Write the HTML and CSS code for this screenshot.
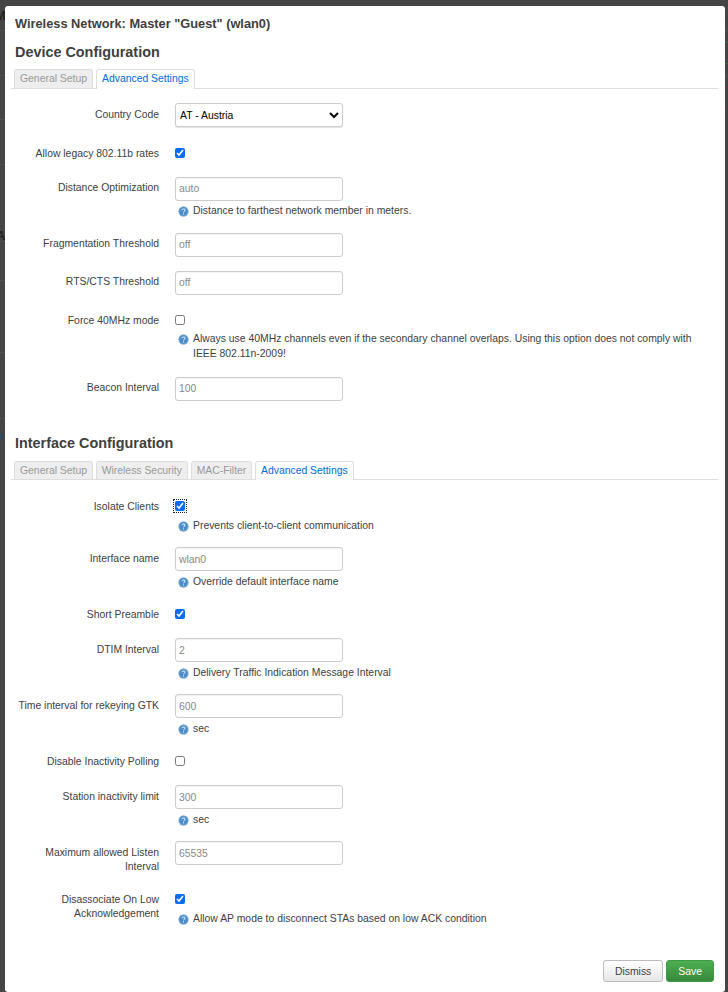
FILE: index.html
```html
<!DOCTYPE html>
<html lang="en">
<head>
<meta charset="utf-8">
<title>Wireless Network</title>
<link rel="stylesheet" href="styles.css">
</head>
<body>
<svg class="defs" width="0" height="0" aria-hidden="true">
  <defs>
    <radialGradient id="hg" cx="50%" cy="50%" r="55%">
      <stop offset="0" stop-color="#3d86c6"/>
      <stop offset="0.65" stop-color="#4f90c8"/>
      <stop offset="1" stop-color="#9dbcd6"/>
    </radialGradient>
    <symbol id="help" viewBox="0 0 12 12">
      <circle cx="6" cy="6" r="5.6" fill="url(#hg)"/>
      <path d="M4.4 4.7c0-2 3.2-2 3.2-.1 0 1.200-1.600 1.200-1.600 2.500M6 7.900v1.300" fill="none" stroke="#d5e4f2" stroke-width="1.100"/>
    </symbol>
  </defs>
</svg>
<div class="backdrop" aria-hidden="true">
  <span class="bd-text bd-m">M</span>
  <span class="bd-text bd-a">A</span>
  <span class="bd-text bd-p">P</span>
</div>
<div class="modal">
  <h4 class="title">Wireless Network: Master "Guest" (wlan0)</h4>

  <section class="section">
    <h3>Device Configuration</h3>
    <ul class="tabs">
      <li>General Setup</li>
      <li class="active">Advanced Settings</li>
    </ul>
    <div class="form">
      <div class="row r-select"><label>Country Code</label><div class="field"><select class="select"><option>AT - Austria</option></select></div></div>
      <div class="row r-check"><label>Allow legacy 802.11b rates</label><div class="field"><div class="check"><input type="checkbox" checked></div></div></div>
      <div class="row"><label>Distance Optimization</label><div class="field"><input class="text" placeholder="auto"><p class="help"><svg><use href="#help"/></svg><span>Distance to farthest network member in meters.</span></p></div></div>
      <div class="row"><label>Fragmentation Threshold</label><div class="field"><input class="text" placeholder="off"></div></div>
      <div class="row"><label>RTS/CTS Threshold</label><div class="field"><input class="text" placeholder="off"></div></div>
      <div class="row r-check"><label>Force 40MHz mode</label><div class="field"><div class="check"><input type="checkbox"></div><p class="help multi"><svg><use href="#help"/></svg><span>Always use 40MHz channels even if the secondary channel overlaps. Using this option does not comply with IEEE 802.11n-2009!</span></p></div></div>
      <div class="row"><label>Beacon Interval</label><div class="field"><input class="text" placeholder="100"></div></div>
    </div>
  </section>

  <section class="section second">
    <h3>Interface Configuration</h3>
    <ul class="tabs">
      <li>General Setup</li>
      <li>Wireless Security</li>
      <li>MAC-Filter</li>
      <li class="active">Advanced Settings</li>
    </ul>
    <div class="form">
      <div class="row r-check r-tight"><label>Isolate Clients</label><div class="field"><div class="check"><input class="focused" type="checkbox" checked></div><p class="help"><svg><use href="#help"/></svg><span>Prevents client-to-client communication</span></p></div></div>
      <div class="row r-input"><label>Interface name</label><div class="field"><input class="text" placeholder="wlan0"><p class="help"><svg><use href="#help"/></svg><span>Override default interface name</span></p></div></div>
      <div class="row r-check"><label>Short Preamble</label><div class="field"><div class="check"><input type="checkbox" checked></div></div></div>
      <div class="row r-input"><label>DTIM Interval</label><div class="field"><input class="text" placeholder="2"><p class="help"><svg><use href="#help"/></svg><span>Delivery Traffic Indication Message Interval</span></p></div></div>
      <div class="row r-input"><label>Time interval for rekeying GTK</label><div class="field"><input class="text" placeholder="600"><p class="help"><svg><use href="#help"/></svg><span>sec</span></p></div></div>
      <div class="row r-check"><label>Disable Inactivity Polling</label><div class="field"><div class="check"><input type="checkbox"></div></div></div>
      <div class="row r-input"><label>Station inactivity limit</label><div class="field"><input class="text" placeholder="300"><p class="help"><svg><use href="#help"/></svg><span>sec</span></p></div></div>
      <div class="row r-input"><label>Maximum allowed Listen Interval</label><div class="field"><input class="text" placeholder="65535"></div></div>
      <div class="row r-check"><label>Disassociate On Low Acknowledgement</label><div class="field"><div class="check"><input type="checkbox" checked></div><p class="help"><svg><use href="#help"/></svg><span>Allow AP mode to disconnect STAs based on low ACK condition</span></p></div></div>
    </div>
  </section>

  <div class="actions">
    <button class="btn">Dismiss</button>
    <button class="btn save">Save</button>
  </div>
</div>
</body>
</html>
```
FILE: styles.css
```css
* { box-sizing: border-box; }
html, body { margin: 0; height: 992px; overflow: hidden; }
body {
  position: relative;
  background: #454545;
  font-family: "Liberation Sans", Arial, sans-serif;
  font-size: 10.4px;
  color: #404040;
  padding: 6px 3px 0 5px;
}
.defs { position: absolute; }

/* The dimmed page that shows beside the modal */
.backdrop {
  position: absolute;
  inset: 0;
  overflow: hidden;
  background:
    linear-gradient(#505050, #505050) 0 30px / 5px 1px no-repeat,
    linear-gradient(#505050, #505050) 0 75px / 5px 1px no-repeat,
    linear-gradient(#505050, #505050) 0 119px / 5px 1px no-repeat,
    linear-gradient(#505050, #505050) 0 164px / 5px 1px no-repeat,
    linear-gradient(#505050, #505050) 0 241px / 5px 1px no-repeat,
    linear-gradient(#505050, #505050) 0 280px / 5px 1px no-repeat,
    linear-gradient(#505050, #505050) 0 352px / 5px 1px no-repeat,
    linear-gradient(#505050, #505050) 0 418px / 5px 1px no-repeat,
    linear-gradient(#505050, #505050) 725px 30px / 3px 1px no-repeat,
    linear-gradient(#505050, #505050) 725px 76px / 3px 1px no-repeat,
    linear-gradient(#2f6a3a, #2f6a3a) 725px 42px / 3px 1px no-repeat,
    linear-gradient(#2f6a3a, #2f6a3a) 725px 63px / 3px 1px no-repeat,
    linear-gradient(#6e3340, #6e3340) 725px 87px / 3px 1px no-repeat,
    linear-gradient(#6e3340, #6e3340) 725px 108px / 3px 1px no-repeat;
}
.bd-text { position: absolute; left: -5px; font-size: 13px; line-height: 14px; font-weight: bold; color: #222; }
.bd-m { top: 9px; }
.bd-a { top: 229px; left: -4px; }
.bd-p { top: 431px; left: -4px; color: #234a70; font-size: 11px; }

.modal {
  position: relative;
  background: #fff;
  width: 720px;
  height: 986px;
  padding: 10px 10px 0;
  border-radius: 3px;
}
.title { margin: 0 0 10px; font-size: 12.8px; line-height: 16px; font-weight: bold; color: #404040; }
.section h3 { margin: 0 0 7px; font-size: 14.4px; line-height: 20px; font-weight: bold; color: #404040; }
.second { padding-top: 18px; }
.second h3 { margin-bottom: 8px; }

.tabs {
  list-style: none;
  margin: 0 -3px 0 -4px;
  padding: 0 0 0 3px;
  display: flex;
  gap: 3px;
  border-bottom: 1px solid #ddd;
  height: 20px;
}
.second .tabs { height: 19px; gap: 2.7px; }
.tabs li {
  padding: 0 5px;
  line-height: 18px;
  color: #999;
  background: #eee;
  border: 1px solid #ddd;
  border-bottom: 0;
  border-radius: 3px 3px 0 0;
}
.tabs li.active { margin-bottom: -1px; color: #0069d6; background: #fff; }

.form { padding-top: 14px; }
.second .form { padding-top: 15px; }
.row { display: flex; gap: 16px; margin-bottom: 14px; }
.row.r-tight { margin-bottom: 13px; }
.row label { width: 144px; flex: none; text-align: right; line-height: 14px; padding: 4px 0 1px; }
.r-select { margin-bottom: 15px; }
.r-select label, .r-check label { padding-top: 5px; }
.row.r-input label { padding: 5px 0 0; }
.field { flex: 1; min-width: 0; }

.select {
  display: block;
  width: 168px;
  height: 24px;
  background: #fff;
  border: 1px solid #ccc;
  border-radius: 3px;
  font: 10.4px "Liberation Sans", Arial, sans-serif;
  color: #000;
  padding: 0;
  box-shadow: 0 1px 1px rgba(0,0,0,.12);
}
.text {
  display: block;
  width: 168px;
  height: 24px;
  border: 1px solid #ccc;
  border-radius: 3px;
  padding: 0 3px 2px;
  font: 10.4px "Liberation Sans", Arial, sans-serif;
  color: #555;
  box-shadow: inset 0 1px 1px rgba(0,0,0,.05);
  outline: none;
  background: #fff;
}
.r-input .text { padding-bottom: 0; }
.text::placeholder { color: #888; opacity: 1; }

.check { height: 21px; padding-top: 6px; }
input[type=checkbox] { display: block; width: 10px; height: 10px; margin: 0; accent-color: #0a6cf5; }
input.focused { outline: 1px dotted #222; outline-offset: 1px; }

.help { margin: 0; display: flex; gap: 4px; padding: 2px 0 1px 3px; line-height: 15px; }
.help.multi { padding: 1px 0 2px 3px; }
.r-input .help { padding: 3px 0 0 3px; }
.help svg { width: 11px; height: 11px; flex: none; margin-top: 3px; }

.actions { display: flex; justify-content: flex-end; gap: 3px; padding-top: 19px; margin-right: 1px; }
.btn {
  height: 22px;
  padding: 0 11px;
  border-radius: 3px;
  font: 10.4px "Liberation Sans", Arial, sans-serif;
  color: #404040;
  background: linear-gradient(#fff, #e6e6e6);
  border: 1px solid #bbb;
}
.btn.save { color: #fff; background: linear-gradient(#4caf50, #378a3c); border-color: #3f9a44; }
```
